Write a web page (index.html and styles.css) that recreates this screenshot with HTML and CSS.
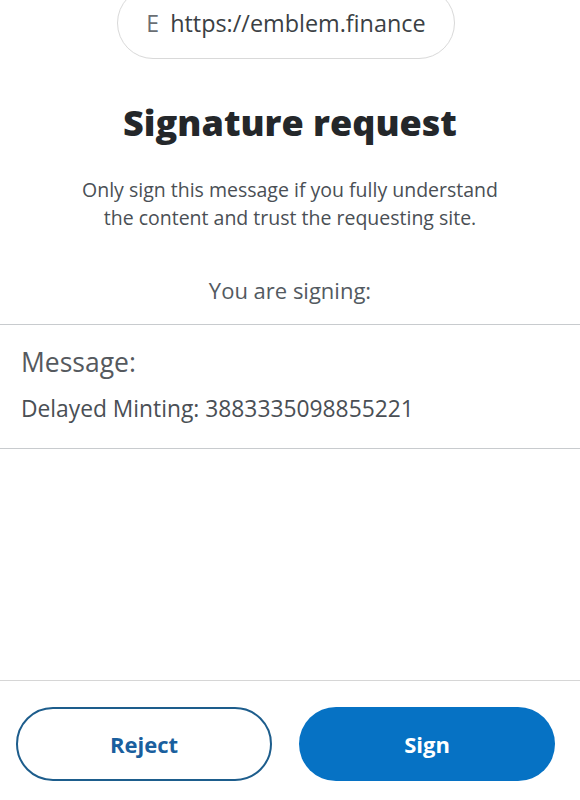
FILE: index.html
```html
<!DOCTYPE html>
<html lang="en">
<head>
     <meta charset="UTF-8">
     <meta name="viewport" content="width=device-width, initial-scale=1.0">
     <title>Signature request</title>
     <link rel="stylesheet" href="styles.css">
</head>
<body>
     <div class="wrapper">
          <div class="site-pill">
               <span class="site-icon">E</span>
               <span class="site-url">https://emblem.finance</span>
          </div>
          <h1 class="title">Signature request</h1>
          <p class="notice">Only sign this message if you fully understand<br>the content and trust the requesting site.</p>
          <div class="signing">You are signing:</div>
          <div class="message">
               <div class="message-label">Message:</div>
               <div class="message-text">Delayed Minting: 3883335098855221</div>
          </div>
          <div class="spacer"></div>
          <div class="footer">
               <button class="btn btn-reject">Reject</button>
               <button class="btn btn-sign">Sign</button>
          </div>
     </div>
</body>
</html>
```
FILE: styles.css
```css
body{
     margin: 0;
     background: #ffffff;
     font-family: "Open Sans", "Lato", sans-serif;
     color: #535a61;
}
.wrapper{
     width: 580px;
     height: 800px;
     display: flex;
     flex-direction: column;
     overflow: hidden;
}
.site-pill{
     width: 336px;
     height: 70px;
     margin: -13px 0 0 117px;
     border: 1.5px solid #d9d9d9;
     border-radius: 40px;
     display: flex;
     align-items: center;
     justify-content: center;
     gap: 11px;
     font-size: 23.4px;
     color: #3b3f44;
}
.site-icon{
     color: #6a6e73;
     font-size: 23px;
}
.title{
     margin: 41px 0 0;
     text-align: center;
     font-size: 36px;
     font-weight: 800;
     color: #24272a;
     line-height: 46px;
}
.notice{
     margin: 30px 0 0;
     text-align: center;
     font-size: 19.5px;
     line-height: 28px;
     color: #4a4f55;
}
.signing{
     margin-top: 45px;
     text-align: center;
     font-size: 22px;
     line-height: 26px;
     padding-bottom: 21px;
     border-bottom: 1.5px solid #c8cbce;
}
.message{
     padding: 22px 21px 26px;
     border-bottom: 1.5px solid #c8cbce;
}
.message-label{
     font-size: 26.5px;
     line-height: 30px;
     color: #55595e;
}
.message-text{
     margin-top: 19px;
     font-size: 22.8px;
     line-height: 26px;
     color: #4a4f55;
}
.spacer{
     height: 231px;
     border-bottom: 1.5px solid #d6d6d6;
}
.footer{
     display: flex;
     gap: 27px;
     padding: 26px 0 0 16px;
}
.btn{
     width: 256px;
     height: 74px;
     border-radius: 37px;
     font-family: "Open Sans", sans-serif;
     font-size: 22px;
     font-weight: 700;
}
.btn-reject{
     background: #ffffff;
     border: 2px solid #1d5d8c;
     color: #1a5f9e;
}
.btn-sign{
     background: #0672c4;
     border: none;
     color: #ffffff;
}
```
